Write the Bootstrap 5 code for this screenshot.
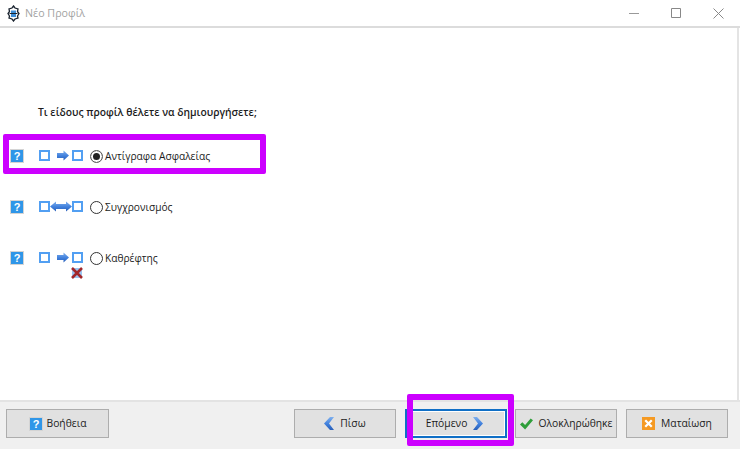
<!DOCTYPE html>
<html lang="el">
<head>
<meta charset="utf-8">
<title>Νέο Προφίλ</title>
<link href="https://cdn.jsdelivr.net/npm/bootstrap@5.3.0/dist/css/bootstrap.min.css" rel="stylesheet">
<style>
html,body{margin:0;height:100%;overflow:hidden;background:#fff}
body{font-family:"Open Sans","DejaVu Sans",sans-serif;font-size:10.2px;color:#1c1c1c}
.win{width:740px;height:449px;position:relative}
.tbar{height:26px;padding:0 1px 0 7px;border-bottom:2px solid #dcdcdc;box-sizing:content-box}
.ttl{color:#a3a3a3;font-size:10.7px;margin-left:5px}
.wctl{width:42px}
.pane{padding:0 0 0 10px;border-right:2px solid #e4e4e4;margin-right:1px}
.ask{margin:75px 0 0 28px;font-weight:600;height:18px;line-height:18px;font-size:10.3px}
.opt{height:51px}
.optlist{margin-top:28px}
.hlp{width:14px;height:14px;flex:none}
.pair{width:44px;margin:0 7px 0 15px;padding-top:1px;flex:none;position:relative}
.arw{margin:0 3px 0 7px}
.rad{width:13px;height:13px;margin:1px 2px 0 0;border:1px solid #333;border-radius:50%;flex:none;background:#fff}
.rad.on{border-color:#555;box-shadow:inset 0 0 0 2px #fff,inset 0 0 0 6px #222}
.lbl{line-height:15px}
.foot{height:49px;background:#f0f0f0;border-top:2px solid #e3e3e3;padding:7px 12px 9px 6px}
.wbtn{width:102px;height:29px;background:#e1e1e1;border:1px solid #adadad;border-radius:0;padding:0;font-size:10.3px;color:#1c1c1c;line-height:1;gap:6px}
.wbtn:hover{background:#e1e1e1;color:#1c1c1c}
.wbtn.wide{width:103px;gap:4px}
.wbtn.cur{border:2px solid #0f6fc6;box-shadow:inset 0 0 0 1px #fff;padding-right:3px}
.btnset{gap:8px}
.nudge{margin-left:1px}
.mark1{position:absolute;left:3px;top:134px;width:263px;height:40px;border:6px solid #cc00ff;border-radius:2px;pointer-events:none}
.mark2{position:absolute;left:407px;top:394px;width:107px;height:52px;border:6px solid #cc00ff;border-radius:2px;pointer-events:none}
.xmk{position:absolute;left:32px;top:16px}
</style>
</head>
<body>
<svg width="0" height="0" class="position-absolute">
  <defs>
    <linearGradient id="blu" x1="0" y1="0" x2="0" y2="1"><stop offset="0" stop-color="#7fb0ee"/><stop offset=".55" stop-color="#3f7fdc"/><stop offset="1" stop-color="#2a5fb8"/></linearGradient>
    <symbol id="hq" viewBox="0 0 14 14"><rect x=".5" y=".5" width="13" height="13" fill="#eef2f5" stroke="#d4d4d4"/><rect x="1" y="1" width="12" height="12" fill="#2f96e8"/><text x="7" y="11" text-anchor="middle" font-family="Liberation Sans" font-weight="700" font-size="11" fill="#fff">?</text></symbol>
    <symbol id="sq" viewBox="0 0 11 11"><rect x="1" y="1" width="9" height="9" fill="#fff" stroke="#529ff2" stroke-width="2"/></symbol>
  </defs>
</svg>
<div class="win d-flex flex-column">
  <div class="tbar d-flex align-items-center">
    <svg width="13" height="17" viewBox="0 0 13 17"><path d="M6.500 1 8 3 11 4 10.500 6.500 12 8.500 10.500 11 11 13 8 14 6.500 16 5 14 2 13 2.500 11 1 8.500 2.500 6.500 2 4 5 3z" fill="#fff" stroke="#1b2430" stroke-width="1.300"/><path d="M4 5.500H9V12H4z" fill="#3f8fd8"/><path d="M2.500 8.500H10.500" stroke="#1b2430"/></svg>
    <span class="ttl flex-grow-1">Νέο Προφίλ</span>
    <span class="wctl d-flex justify-content-center"><svg width="10" height="10"><path d="M0 5.500H10" stroke="#999"/></svg></span>
    <span class="wctl d-flex justify-content-center"><svg width="10" height="10"><path d="M.5.500H9.500V9.500H.5z" fill="none" stroke="#888"/></svg></span>
    <span class="wctl d-flex justify-content-center"><svg width="11" height="11"><path d="M.5.500 10.500 10.500M10.500.500.5 10.500" stroke="#888"/></svg></span>
  </div>
  <div class="pane flex-grow-1">
    <div class="ask">Τι είδους προφίλ θέλετε να δημιουργήσετε;</div>
    <div class="optlist">
      <div class="opt d-flex align-items-start">
        <svg class="hlp"><use href="#hq"/></svg>
        <div class="pair d-flex align-items-center">
          <svg width="11" height="11"><use href="#sq"/></svg>
          <svg class="arw" width="12" height="11" viewBox="0 0 12 11"><path d="M0 3H6.500V.5L12 5.500 6.500 10.500V8H0z" fill="url(#blu)"/></svg>
          <svg width="11" height="11"><use href="#sq"/></svg>
        </div>
        <span class="rad on"></span><span class="lbl">Αντίγραφα Ασφαλείας</span>
      </div>
      <div class="opt d-flex align-items-start">
        <svg class="hlp"><use href="#hq"/></svg>
        <div class="pair d-flex align-items-center">
          <svg width="11" height="11"><use href="#sq"/></svg>
          <svg width="22" height="11" viewBox="0 0 22 11"><path d="M0 5.500 6 .5V3H16V.5L22 5.500 16 10.500V8H6V10.500z" fill="url(#blu)"/></svg>
          <svg width="11" height="11"><use href="#sq"/></svg>
        </div>
        <span class="rad"></span><span class="lbl">Συγχρονισμός</span>
      </div>
      <div class="opt d-flex align-items-start">
        <svg class="hlp"><use href="#hq"/></svg>
        <div class="pair d-flex align-items-center">
          <svg width="11" height="11"><use href="#sq"/></svg>
          <svg class="arw" width="12" height="11" viewBox="0 0 12 11"><path d="M0 3H6.500V.5L12 5.500 6.500 10.500V8H0z" fill="url(#blu)"/></svg>
          <svg width="11" height="11"><use href="#sq"/></svg>
          <svg class="xmk" width="12" height="12" viewBox="0 0 12 12"><rect x="1" y="1" width="10" height="10" fill="#9cc4f0"/><path d="M1 1 11 11M11 1 1 11" stroke="#a1272a" stroke-width="2.600"/></svg>
        </div>
        <span class="rad"></span><span class="lbl">Καθρέφτης</span>
      </div>
    </div>
  </div>
  <div class="foot d-flex align-items-start">
    <button class="btn wbtn wide d-flex align-items-center justify-content-center" type="button">
      <svg width="14" height="14"><use href="#hq"/></svg>Βοήθεια</button>
    <div class="btnset d-flex ms-auto">
      <button class="btn wbtn d-flex align-items-center justify-content-center" type="button"><svg width="10" height="13" viewBox="0 0 10 13"><path d="M6 0H10L5 6.500 10 13H6L0 6.500z" fill="url(#blu)"/></svg>Πίσω</button>
      <button class="btn wbtn cur nudge d-flex align-items-center justify-content-center" type="button">Επόμενο<svg width="10" height="13" viewBox="0 0 10 13"><path d="M4 0H0L5 6.500 0 13H4L10 6.500z" fill="url(#blu)"/></svg></button>
      <button class="btn wbtn d-flex align-items-center justify-content-center" type="button"><svg width="13" height="12" viewBox="0 0 14 12"><path d="M0 6.500 2.500 4 5.500 7 11.500 0 14 2 5.500 12z" fill="#2e9e3a"/></svg>Ολοκληρώθηκε</button>
      <button class="btn wbtn nudge d-flex align-items-center justify-content-center" type="button"><svg width="13" height="13" viewBox="0 0 14 14"><rect width="14" height="14" fill="#f59a23"/><path d="M3.500 3.500 10.500 10.500M10.500 3.500 3.500 10.500" stroke="#fff" stroke-width="2.400"/></svg>Ματαίωση</button>
    </div>
  </div>
  <div class="mark1"></div>
  <div class="mark2"></div>
</div>
</body>
</html>
